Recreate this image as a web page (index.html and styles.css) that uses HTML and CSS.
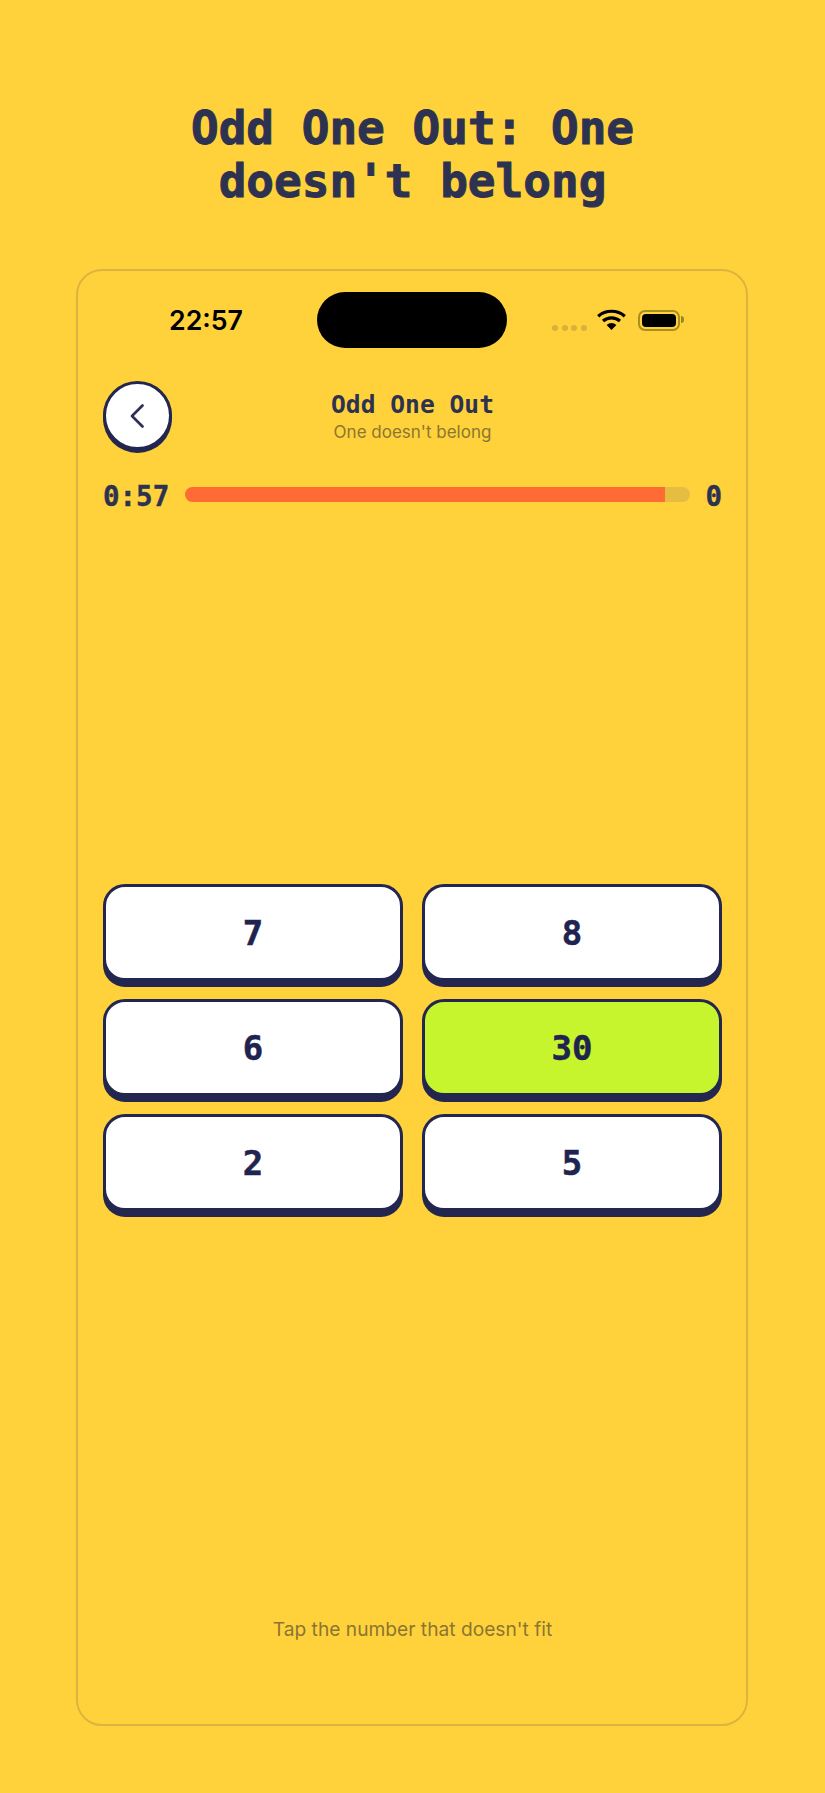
FILE: index.html
```html
<!DOCTYPE html>
<html lang="en">
<head>
<meta charset="utf-8">
<title>Odd One Out</title>
<link rel="stylesheet" href="styles.css">
</head>
<body>
<h1 class="page-title">Odd One Out: One<br>doesn't belong</h1>
<section class="phone">
  <div class="status">
    <span class="clock">22:57</span>
    <span class="island"></span>
    <div class="status-icons">
      <span class="dots"><i></i><i></i><i></i><i></i></span>
      <svg class="wifi" width="29" height="21" viewBox="0 0 29 21" fill="none" stroke="#000" stroke-width="3.2">
        <path d="M1.2 7.2C8.5 .6 20.5 .6 27.8 7.2"/>
        <path d="M6 12C11 7.8 18 7.8 23 12"/>
        <path d="M14.5 21L9.6 16C12.5 13.2 16.5 13.2 19.4 16Z" fill="#000" stroke="none"/>
      </svg>
      <span class="battery"><span class="battery-fill"></span></span>
    </div>
  </div>
  <header class="nav">
    <button class="back" aria-label="Back">
      <svg width="16" height="26" viewBox="0 0 16 26" fill="none" stroke="#2b2e55" stroke-width="2.7" stroke-linecap="round" stroke-linejoin="round"><path d="M13.5 2.5L3 13l10.5 10.5"/></svg>
    </button>
    <div class="nav-text">
      <div class="nav-title">Odd One Out</div>
      <div class="nav-sub">One doesn't belong</div>
    </div>
  </header>
  <div class="timer">
    <span class="timer-label">0:57</span>
    <div class="track"><div class="fill" style="width:95%"></div></div>
    <span class="timer-label">0</span>
  </div>
  <main class="board">
    <div class="grid">
      <button class="tile">7</button>
      <button class="tile">8</button>
      <button class="tile">6</button>
      <button class="tile tile-picked">30</button>
      <button class="tile">2</button>
      <button class="tile">5</button>
    </div>
  </main>
  <p class="hint">Tap the number that doesn't fit</p>
</section>
</body>
</html>
```
FILE: styles.css
```css
* { box-sizing: border-box; }
html, body { margin: 0; height: 100%; }
body {
  background: #ffd23c;
  font-family: Inter, "Liberation Sans", sans-serif;
  width: 825px;
  height: 1793px;
  overflow: hidden;
  padding-top: 102px;
  display: flex;
  flex-direction: column;
  align-items: center;
}
.page-title {
  margin: 0;
  height: 167px;
  font-family: "DejaVu Sans Mono", monospace;
  font-weight: 700;
  font-size: 46px;
  line-height: 53px;
  color: #2d3250;
  -webkit-text-stroke: 1px #2d3250;
  text-align: center;
}
.phone {
  width: 672px;
  height: 1457px;
  margin-right: 1px;
  border: 2px solid #dcb43e;
  border-radius: 26px;
  padding: 0 24px 0 25px;
  display: flex;
  flex-direction: column;
}
.status {
  height: 56px;
  margin-top: 21px;
  display: flex;
  align-items: center;
}
.clock {
  margin-left: 66px;
  font-weight: 600;
  font-size: 26.7px;
  color: #000;
  width: 148px;
}
.island {
  width: 190px;
  height: 56px;
  border-radius: 28px;
  background: #000;
}
.status-icons {
  margin-left: 45px;
  display: flex;
  align-items: center;
  height: 56px;
}
.dots { display: flex; gap: 3.5px; margin-top: 15px; margin-right: 10px; }
.dots i { width: 6px; height: 6px; border-radius: 50%; background: #d9b13c; }
.wifi { margin-top: -1px; }
.battery {
  margin-left: 12px;
  width: 42px;
  height: 21px;
  border: 2px solid #a8901f;
  border-radius: 7px;
  padding: 2px;
  position: relative;
  display: flex;
}
.battery::after {
  content: "";
  position: absolute;
  right: -6px;
  top: 4px;
  width: 3px;
  height: 7px;
  background: #9a8520;
  border-radius: 0 3px 3px 0;
}
.battery-fill { flex: 1; background: #000; border-radius: 4px; }
.nav {
  margin-top: 33px;
  height: 73px;
  position: relative;
  display: flex;
  justify-content: center;
}
.back {
  position: absolute;
  left: 0;
  top: 0;
  width: 69px;
  height: 69px;
  padding: 0 2px 0 0;
  border: 3px solid #23264f;
  border-radius: 50%;
  background: #fff;
  box-shadow: 0 3px 0 #23264f;
  display: flex;
  align-items: center;
  justify-content: center;
}
.nav-text { text-align: center; padding-top: 8px; }
.nav-title {
  font-family: "DejaVu Sans Mono", monospace;
  font-weight: 700;
  font-size: 24.6px;
  line-height: 32px;
  color: #2d3250;
}
.nav-sub {
  font-size: 17px;
  line-height: 22px;
  color: #8a7630;
}
.timer {
  margin-top: 24px;
  display: flex;
  align-items: center;
  height: 32px;
}
.timer-label {
  font-family: "DejaVu Sans Mono", monospace;
  font-weight: 700;
  font-size: 27.5px;
  color: #2d3250;
  padding-top: 3px;
  -webkit-text-stroke: 0.4px #2d3250;
}
.track {
  flex: 1;
  height: 15px;
  margin: 0 15px 0 16px;
  background: #e6bd40;
  border-radius: 8px;
  overflow: hidden;
}
.fill { height: 100%; background: #ff6b35; }
.board {
  flex: 1;
  display: flex;
  flex-direction: column;
  justify-content: center;
}
.grid {
  display: grid;
  grid-template-columns: 1fr 1fr;
  column-gap: 19px;
  row-gap: 18px;
  margin-top: -32px;
}
.tile {
  height: 97px;
  border: 3px solid #23264f;
  border-radius: 22px;
  background: #fff;
  box-shadow: 0 6px 0 #23264f;
  font-family: "DejaVu Sans Mono", monospace;
  font-weight: 700;
  font-size: 34px;
  color: #1f2350;
  -webkit-text-stroke: 0.5px #1f2350;
  padding: 0;
}
.tile-picked { background: #c6f52e; }
.hint {
  margin: 0 0 83px;
  text-align: center;
  font-size: 19.2px;
  line-height: 24px;
  color: #8a7630;
}
```
